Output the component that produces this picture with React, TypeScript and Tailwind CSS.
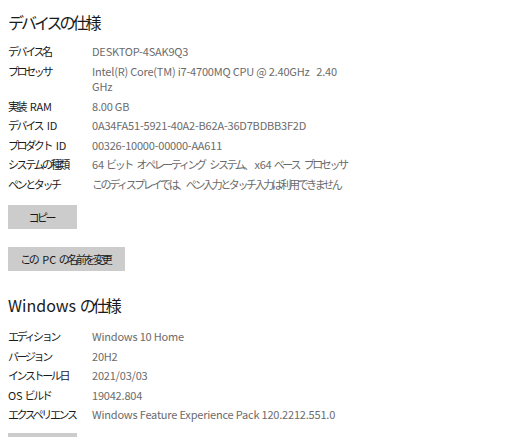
import React from 'react';

type Row = { label: string; value: React.ReactNode };

// Yu Gothic UI の仮名は狭いので、CJK の連続部分だけ字間を詰める
function Jp({ text, tight = 'tracking-[-2.4px] mr-[2.4px]' }: { text: string; tight?: string }) {
  const parts = text.split(/([\u3000-\u30ff\u4e00-\u9fff\uff00-\uffef]+)/);
  return (
    <>
      {parts.map((p, i) =>
        i % 2 === 1 ? (
          <span key={i} className={tight}>
            {p}
          </span>
        ) : (
          <React.Fragment key={i}>{p}</React.Fragment>
        )
      )}
    </>
  );
}

const deviceRows: Row[] = [
  { label: 'デバイス名', value: 'DESKTOP-4SAK9Q3' },
  {
    label: 'プロセッサ',
    value: (
      <>
        Intel(R) Core(TM) i7-4700MQ CPU @ 2.40GHz&nbsp;&nbsp;&nbsp;2.40
        <br />
        GHz
      </>
    ),
  },
  { label: '実装 RAM', value: '8.00 GB' },
  { label: 'デバイス ID', value: '0A34FA51-5921-40A2-B62A-36D7BDBB3F2D' },
  { label: 'プロダクト ID', value: '00326-10000-00000-AA611' },
  { label: 'システムの種類', value: '64 ビット オペレーティング システム、x64 ベース プロセッサ' },
  { label: 'ペンとタッチ', value: 'このディスプレイでは、ペン入力とタッチ入力は利用できません' },
];

const windowsRows: Row[] = [
  { label: 'エディション', value: 'Windows 10 Home' },
  { label: 'バージョン', value: '20H2' },
  { label: 'インストール日', value: '2021/03/03' },
  { label: 'OS ビルド', value: '19042.804' },
  { label: 'エクスペリエンス', value: 'Windows Feature Experience Pack 120.2212.551.0' },
];

function SpecTable({ rows }: { rows: Row[] }) {
  return (
    <div className="flex flex-col">
      {rows.map((r) => (
        <div key={r.label} className="flex text-[11px] leading-[15.5px] py-[2px] tracking-[-0.2px]">
          <div className="w-[84px] shrink-0 text-[#1a1a1a] whitespace-nowrap">
            <Jp text={r.label} />
          </div>
          <div className="text-[#6b6b6b] whitespace-nowrap">
            {typeof r.value === 'string' ? <Jp text={r.value} /> : r.value}
          </div>
        </div>
      ))}
    </div>
  );
}

function GrayButton({ children, className = '' }: { children?: React.ReactNode; className?: string }) {
  return (
    <button
      type="button"
      className={`h-[24px] bg-[#cccccc] text-[11px] text-[#1a1a1a] flex items-center justify-center whitespace-nowrap ${className}`}
    >
      <span>{children}</span>
    </button>
  );
}

export default function App() {
  return (
    <div
      className="w-[512px] h-[437px] overflow-hidden bg-white pl-2 pt-[10px]"
      style={{ fontFamily: '"Noto Sans CJK JP", "Noto Sans", sans-serif' }}
    >
      <h2 className="text-[16px] leading-[24px] text-[#1a1a1a] mb-[8px]">
        <Jp text="デバイスの仕様" tight="tracking-[-3px] mr-[3px]" />
      </h2>
      <SpecTable rows={deviceRows} />
      <div className="mt-[11px] flex flex-col gap-[18px] items-start">
        <GrayButton className="w-[69px]">
          <Jp text="コピー" />
        </GrayButton>
        <GrayButton className="w-[117px]">
          <Jp text="この PC の名前を変更" />
        </GrayButton>
      </div>
      <h2 className="text-[16px] leading-[24px] text-[#1a1a1a] mt-[22px] mb-[10px]">
        <Jp text="Windows の仕様" tight="tracking-[-3px] mr-[3px]" />
      </h2>
      <SpecTable rows={windowsRows} />
      <GrayButton className="w-[69px] mt-[8px]" />
    </div>
  );
}
